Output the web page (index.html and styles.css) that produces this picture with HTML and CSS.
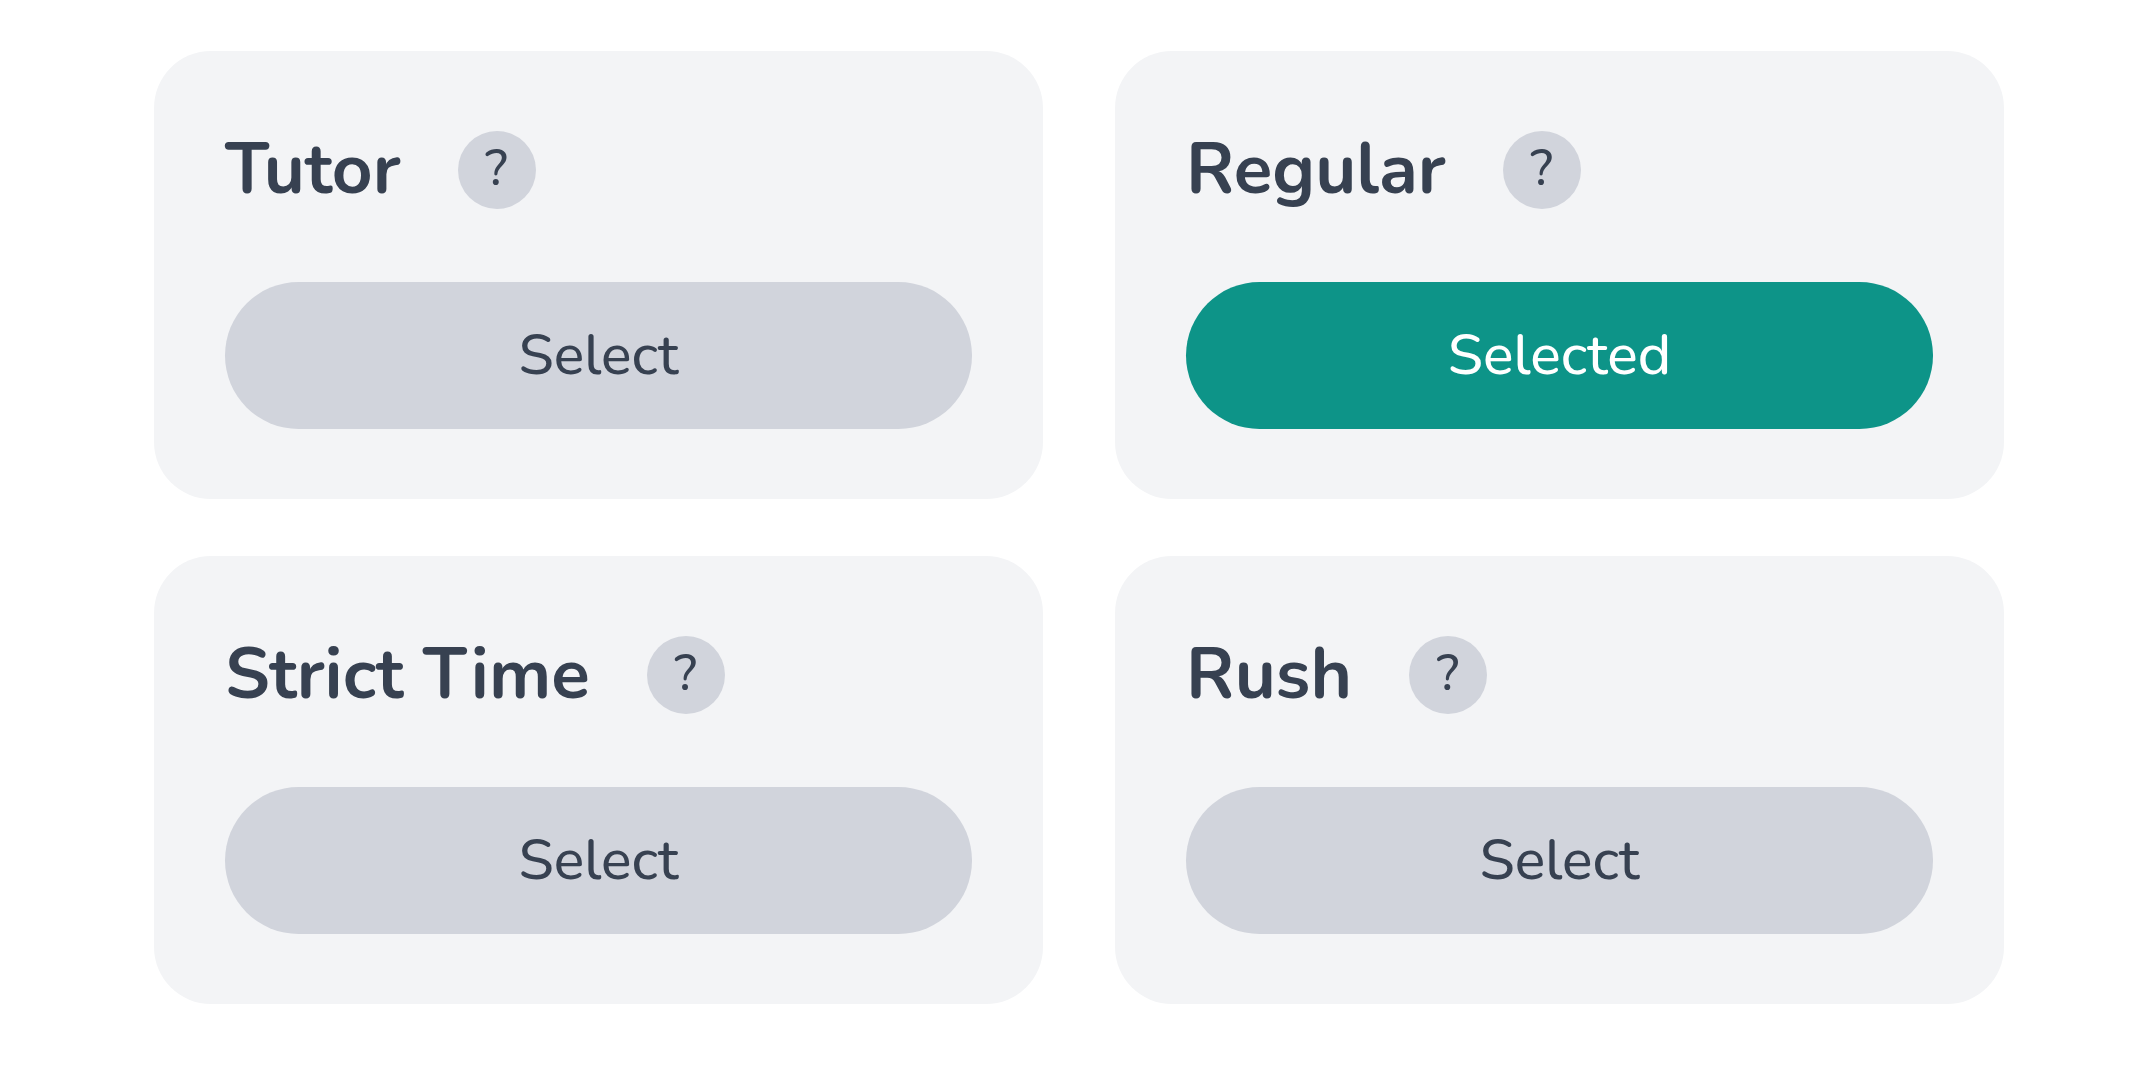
FILE: index.html
```html
<!DOCTYPE html>
<html lang="en">
<head>
  <meta charset="utf-8">
  <meta name="viewport" content="width=device-width, initial-scale=1">
  <title>Modes</title>
  <link rel="stylesheet" href="styles.css">
</head>
<body>
  <main class="modes">
    <section class="card">
      <div class="card-header">
        <h2>Tutor</h2>
        <button type="button" class="help">?</button>
      </div>
      <button type="button" class="select">Select</button>
    </section>
    <section class="card">
      <div class="card-header">
        <h2>Regular</h2>
        <button type="button" class="help">?</button>
      </div>
      <button type="button" class="select selected">Selected</button>
    </section>
    <section class="card">
      <div class="card-header">
        <h2>Strict Time</h2>
        <button type="button" class="help">?</button>
      </div>
      <button type="button" class="select">Select</button>
    </section>
    <section class="card">
      <div class="card-header">
        <h2>Rush</h2>
        <button type="button" class="help">?</button>
      </div>
      <button type="button" class="select">Select</button>
    </section>
  </main>
</body>
</html>
```

FILE: styles.css
```css
* {box-sizing: border-box;}
body {
  margin: 0;
  background-color: #fff;
  color: #374151;
  font-family: Nunito, Lato, sans-serif;
}
.modes {
  display: grid;
  grid-template-columns: 1fr 1fr;
  gap: 57px 72px;
  padding: 51px 134px 64px 154px;
}
.card {
  padding: 70px 71px;
  background-color: #f3f4f6;
  border-radius: 57px;
}
.card-header {
  display: flex;
  align-items: center;
  gap: 57px;
  margin-bottom: 64px;
}
h2 {
  margin: 0;
  font-size: 71px;
  line-height: 97px;
  font-weight: 700;
}
button {
  padding: 0 0 2px;
  border: none;
  background-color: #d1d4dc;
  color: inherit;
  font-family: inherit;
  font-weight: 500;
  cursor: pointer;
}
.help {
  width: 78px;
  height: 78px;
  border-radius: 50%;
  font-size: 50px;
}
.select {
  display: block;
  width: 100%;
  height: 147px;
  border-radius: 74px;
  font-size: 57px;
}
.selected {
  background-color: #0d9488;
  color: #fff;
}
```
